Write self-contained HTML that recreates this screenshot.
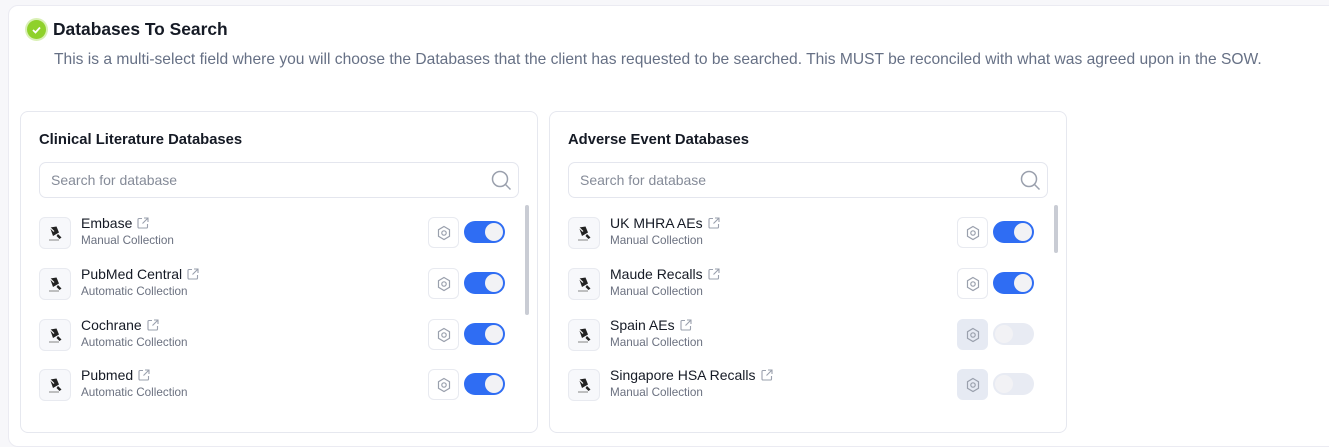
<!DOCTYPE html><html><head><style>
body{margin:0;width:1329px;height:434px;background:#f7f7fa;font-family:"Liberation Sans",sans-serif;overflow:hidden;position:relative}
.outer{position:absolute;left:8px;top:5px;width:1340px;height:440px;background:#fff;border:1px solid #ebebf2;border-radius:10px}
.chk{position:absolute;left:27px;top:20px;width:19px;height:19px;border-radius:50%;background:#8fd12a;box-shadow:0 0 0 2px #d9f0b5}
.h{position:absolute;left:53px;top:19px;font-size:17.4px;font-weight:bold;color:#151a25}
.d{position:absolute;left:54px;top:51px;font-size:15.6px;color:#667085;white-space:nowrap}
.card{position:absolute;top:111px;width:516px;height:320px;border:1px solid #e6e8ef;border-radius:8px;background:#fff;overflow:hidden}
.ct{position:absolute;left:18px;top:20px;font-size:14.8px;font-weight:bold;color:#151a25}
.srch{position:absolute;left:18px;top:50px;width:478px;height:34px;border:1px solid #e4e6ee;border-radius:7px;font-size:14px;color:#858b98;line-height:34px;text-indent:11px}
.srch svg{position:absolute;right:4px;top:6px}
.row{position:absolute;left:18px;height:32px;width:470px}
.ic{position:absolute;left:0;top:0;width:30px;height:30px;border:1px solid #e8eaf0;border-radius:6px;background:#f7f8fb}
.ic svg{position:absolute;left:6px;top:6px}
.nm{position:absolute;left:42px;top:-2px;font-size:14px;color:#151a25}
.nm svg{vertical-align:-1px;margin-left:5px}
.sub{position:absolute;left:42px;top:17px;font-size:11.7px;color:#6b7180}
.g{position:absolute;left:389px;top:0;width:29px;height:29px;border:1px solid #e8eaf0;border-radius:6px;background:#fff}
.g svg{position:absolute;left:7px;top:7px}
.g.off{background:#e6eaf3;border-color:#e6eaf3}
.tg{position:absolute;left:425px;top:4px;width:41px;height:22px;border-radius:11px;background:#2f6df3}
.tg:after{content:"";position:absolute;right:2px;top:2px;width:18px;height:18px;border-radius:50%;background:#f2f2f5}
.tg.off{background:#e8ebf3}
.tg.off:after{left:2px;right:auto}
.sb{position:absolute;left:504px;top:93px;width:4px;height:110px;background:#c9ccd4;border-radius:2px}
</style></head><body>
<div class="outer"></div>
<div class="chk"><svg width="19" height="19"><path d="M6 10l2.5 2.5L13 7.5" stroke="#fff" stroke-width="1.8" fill="none"/></svg></div>
<div class="h">Databases To Search</div>
<div class="d">This is a multi-select field where you will choose the Databases that the client has requested to be searched. This MUST be reconciled with what was agreed upon in the SOW.</div>

<svg width="0" height="0" style="position:absolute"><defs>
<symbol id="pen" viewBox="0 0 18 18"><path d="M4 3.5l6.5-1 2.5 6-6 3.5z" fill="#222"/><path d="M4 3.5l4 4" stroke="#fff" stroke-width="1.2"/><path d="M12 10l3.5 3.5-2 1.5-3-3" fill="#222"/><path d="M3 16h10" stroke="#999" stroke-width="1.2"/></symbol>
<symbol id="hex" viewBox="0 0 16 16"><path d="M8 1.5l5.5 3.2v6.6L8 14.5l-5.5-3.2V4.7z" fill="none" stroke="#9aa0ad" stroke-width="1.2"/><circle cx="8" cy="8" r="2.2" fill="none" stroke="#9aa0ad" stroke-width="1.2"/></symbol>
<symbol id="ext" viewBox="0 0 12 12"><path d="M5 1.5H2a1 1 0 0 0-1 1V10a1 1 0 0 0 1 1h7.5a1 1 0 0 0 1-1V7M7 1h4v4M11 1L5.5 6.5" fill="none" stroke="#9aa0ad" stroke-width="1.1"/></symbol>
</defs></svg>

<div class="card" style="left:20px">
<div class="ct">Clinical Literature Databases</div>
<div class="srch">Search for database<svg width="24" height="24"><circle cx="10" cy="10" r="7.5" fill="none" stroke="#9aa0ad" stroke-width="1.5"/><path d="M15.5 15.5l5 5" stroke="#9aa0ad" stroke-width="1.5"/></svg></div>
<div class="sb"></div>
<div class="row" style="top:105px"><div class="ic"><svg width="18" height="18"><use href="#pen"/></svg></div><div class="nm">Embase<svg width="12" height="12"><use href="#ext"/></svg></div><div class="sub">Manual Collection</div><div class="g"><svg width="16" height="16"><use href="#hex"/></svg></div><div class="tg"></div></div>
<div class="row" style="top:156px"><div class="ic"><svg width="18" height="18"><use href="#pen"/></svg></div><div class="nm">PubMed Central<svg width="12" height="12"><use href="#ext"/></svg></div><div class="sub">Automatic Collection</div><div class="g"><svg width="16" height="16"><use href="#hex"/></svg></div><div class="tg"></div></div>
<div class="row" style="top:207px"><div class="ic"><svg width="18" height="18"><use href="#pen"/></svg></div><div class="nm">Cochrane<svg width="12" height="12"><use href="#ext"/></svg></div><div class="sub">Automatic Collection</div><div class="g"><svg width="16" height="16"><use href="#hex"/></svg></div><div class="tg"></div></div>
<div class="row" style="top:257px"><div class="ic"><svg width="18" height="18"><use href="#pen"/></svg></div><div class="nm">Pubmed<svg width="12" height="12"><use href="#ext"/></svg></div><div class="sub">Automatic Collection</div><div class="g"><svg width="16" height="16"><use href="#hex"/></svg></div><div class="tg"></div></div>
</div>

<div class="card" style="left:549px">
<div class="ct">Adverse Event Databases</div>
<div class="srch">Search for database<svg width="24" height="24"><circle cx="10" cy="10" r="7.5" fill="none" stroke="#9aa0ad" stroke-width="1.5"/><path d="M15.5 15.5l5 5" stroke="#9aa0ad" stroke-width="1.5"/></svg></div>
<div class="sb" style="height:48px"></div>
<div class="row" style="top:105px"><div class="ic"><svg width="18" height="18"><use href="#pen"/></svg></div><div class="nm">UK MHRA AEs<svg width="12" height="12"><use href="#ext"/></svg></div><div class="sub">Manual Collection</div><div class="g"><svg width="16" height="16"><use href="#hex"/></svg></div><div class="tg"></div></div>
<div class="row" style="top:156px"><div class="ic"><svg width="18" height="18"><use href="#pen"/></svg></div><div class="nm">Maude Recalls<svg width="12" height="12"><use href="#ext"/></svg></div><div class="sub">Manual Collection</div><div class="g"><svg width="16" height="16"><use href="#hex"/></svg></div><div class="tg"></div></div>
<div class="row" style="top:207px"><div class="ic"><svg width="18" height="18"><use href="#pen"/></svg></div><div class="nm">Spain AEs<svg width="12" height="12"><use href="#ext"/></svg></div><div class="sub">Manual Collection</div><div class="g off"><svg width="16" height="16"><use href="#hex"/></svg></div><div class="tg off"></div></div>
<div class="row" style="top:257px"><div class="ic"><svg width="18" height="18"><use href="#pen"/></svg></div><div class="nm">Singapore HSA Recalls<svg width="12" height="12"><use href="#ext"/></svg></div><div class="sub">Manual Collection</div><div class="g off"><svg width="16" height="16"><use href="#hex"/></svg></div><div class="tg off"></div></div>
</div>
</body></html>
